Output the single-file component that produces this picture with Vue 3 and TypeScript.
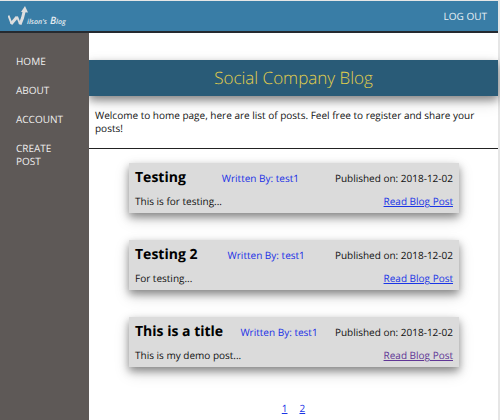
<script setup lang="ts">
interface Post {
  title: string
  author: string
  date: string
  excerpt: string
  visited: boolean
}

const navItems: string[] = ['HOME', 'ABOUT', 'ACCOUNT', 'CREATE POST']

const posts: Post[] = [
  { title: 'Testing', author: 'test1', date: '2018-12-02', excerpt: 'This is for testing...', visited: false },
  { title: 'Testing 2', author: 'test1', date: '2018-12-02', excerpt: 'For testing...', visited: false },
  { title: 'This is a title', author: 'test1', date: '2018-12-02', excerpt: 'This is my demo post...', visited: true },
]

const pages: number[] = [1, 2]
</script>

<template>
  <div class="page">
    <header class="topbar">
      <a class="logo" href="#">
        <svg class="mark" viewBox="0 0 20 20" aria-hidden="true">
          <path class="thin" d="M0.500 9.500 L3.500 17.500" />
          <path class="thick" d="M3 18 L9 11" />
          <path class="thin" d="M9 10.500 L12 18" />
          <path class="thick" d="M12 18.500 L14.500 12 L16.500 4" />
          <path class="head" d="M13 6 L17 0 L20 6.500 Z" />
        </svg>
        <span class="small">ilson's</span>
        <span class="small"><span class="initial">B</span>log</span>
      </a>
      <a class="logout" href="#">LOG OUT</a>
    </header>

    <div class="body">
      <nav class="sidebar">
        <a v-for="item in navItems" :key="item" href="#">{{ item }}</a>
      </nav>

      <main class="content">
        <h1>Social Company Blog</h1>
        <p class="intro">Welcome to home page, here are list of posts. Feel free to register and share your posts!</p>

        <section class="posts">
          <article v-for="post in posts" :key="post.title" class="card">
            <div class="row">
              <h2>{{ post.title }}</h2>
              <a class="author" href="#">Written By: {{ post.author }}</a>
              <span>Published on: {{ post.date }}</span>
            </div>
            <div class="row">
              <span>{{ post.excerpt }}</span>
              <a class="read" :class="{ visited: post.visited }" href="#">Read Blog Post</a>
            </div>
          </article>
        </section>

        <nav class="pager" aria-label="Pages">
          <a v-for="page in pages" :key="page" href="#">{{ page }}</a>
        </nav>
      </main>
    </div>
  </div>
</template>

<style>
body {
  background: #e6e6e6;
}
</style>

<style scoped>
.page {
  box-sizing: border-box;
  display: flex;
  flex-direction: column;
  min-height: 100vh;
  margin-right: 2px;
  padding-top: 1px;
  font-family: 'Open Sans', sans-serif;
  font-size: 10px;
  line-height: 13px;
  text-rendering: geometricPrecision;
  color: #111;
}

.topbar {
  display: flex;
  align-items: center;
  justify-content: space-between;
  height: 30px;
  padding: 0 11px 0 8px;
  background: #397da6;
  border-bottom: 2px solid #252a30;
}

.logo {
  display: flex;
  align-items: flex-end;
  gap: 3px;
  color: #e4ebf0;
  text-decoration: none;
}

.mark {
  width: 20px;
  height: 20px;
  margin-right: -4px;
}

.thin,
.thick {
  fill: none;
  stroke: #dededf;
  stroke-width: 2;
}

.thick {
  stroke-width: 3;
}

.head {
  fill: #dededf;
}

.small {
  font-size: 7px;
  font-style: italic;
  font-weight: 600;
  line-height: 6px;
}

.initial {
  font-size: 10px;
}

.logout {
  color: #e8f0f5;
  text-decoration: none;
}

.body {
  display: flex;
  flex: 1;
}

.sidebar {
  position: relative;
  z-index: 1;
  box-sizing: border-box;
  display: flex;
  flex: 0 0 89px;
  flex-direction: column;
  gap: 16px;
  padding: 22px 16px;
  background: #5e5957;
}

.sidebar a {
  color: #eee;
  text-decoration: none;
}

.content {
  flex: 1;
  min-width: 0;
  padding-top: 27px;
  background: #fff;
}

h1 {
  margin: 0;
  font-size: 17px;
  font-weight: 300;
  line-height: 36px;
  text-align: center;
  color: #e3cf4c;
  background: #295b77;
  box-shadow: 0 4px 8px rgba(0, 0, 0, 0.4), 0 6px 16px rgba(0, 0, 0, 0.15);
}

.intro {
  margin: 0;
  padding: 13px 6px;
  border-bottom: 1px solid #222;
}

.posts {
  display: flex;
  flex-direction: column;
  gap: 27px;
  padding: 14px 39px 0 40px;
}

.card {
  display: flex;
  flex-direction: column;
  gap: 8px;
  padding: 6px 6px 5px;
  background: #dbdbdb;
  box-shadow: 0 4px 8px rgba(0, 0, 0, 0.4), 0 6px 16px rgba(0, 0, 0, 0.15);
}

.row {
  display: flex;
  align-items: baseline;
  justify-content: space-between;
}

h2 {
  margin: 0;
  font-size: 14px;
  font-weight: 700;
  line-height: 18px;
  color: #000;
}

.author {
  color: #1a2fe6;
  text-decoration: none;
}

.read,
.pager a {
  color: #1a35e6;
}

.pager a:visited {
  color: #1a35e6;
}

.read.visited {
  color: #603695;
}

.pager {
  display: flex;
  justify-content: center;
  gap: 12px;
  padding-top: 35px;
}
</style>
